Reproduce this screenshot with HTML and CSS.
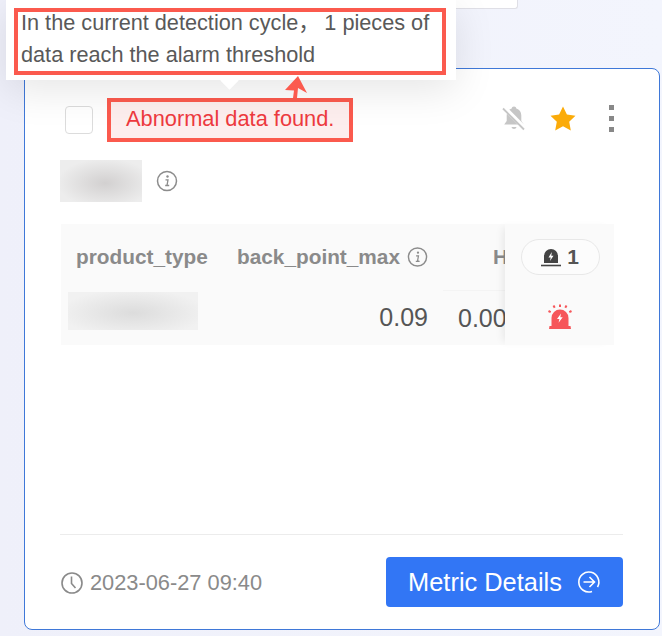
FILE: index.html
```html
<!DOCTYPE html>
<html lang="en">
<head>
    <meta charset="UTF-8">
    <meta name="viewport" content="width=device-width, initial-scale=1.0">
    <title>Metric Card</title>
    <link rel="stylesheet" href="styles.css">
</head>
<body>

    <div class="top-strip"></div>

    <div class="metric-card">
        <div class="card-header">
            <span class="checkbox"></span>
            <span class="status-badge">Abnormal data found.</span>
            <div class="header-actions">
                <svg class="icon-bell" width="26" height="28" viewBox="0 0 26 28">
                    <path d="M13 2.5c1.3 0 2.2.9 2.3 2 3.200.9 5 3.600 5 7v5.500l2.500 3.500H3.200l2.500-3.500V11.500c0-3.400 1.800-6.100 5-7 .1-1.100 1-2 2.300-2z" fill="#c6c6c6"/>
                    <path d="M10.500 23h5c-.3 1.300-1.200 2-2.500 2s-2.200-.7-2.500-2z" fill="#c6c6c6"/>
                    <path d="M3 3.500l20 20" stroke="#fff" stroke-width="4.500"/>
                    <path d="M2 4.500l21 21" stroke="#c6c6c6" stroke-width="1.800"/>
                </svg>
                <svg class="icon-star" width="26" height="25" viewBox="0 0 26 25">
                    <path d="M13 .5l3.900 8 8.600 1.200-6.300 6 1.600 8.800-7.800-4.200-7.800 4.200 1.600-8.800-6.300-6 8.600-1.200z" fill="#fbab09"/>
                </svg>
                <div class="more-dots"><i></i><i></i><i></i></div>
            </div>
        </div>

        <div class="metric-name">
            <div class="blur-block name-blur"></div>
            <svg width="22" height="22" viewBox="0 0 22 22">
                <circle cx="11" cy="11" r="9.500" fill="none" stroke="#8c8c8c" stroke-width="1.500"/>
                <circle cx="11.500" cy="6.500" r="1.200" fill="#8c8c8c"/>
                <path d="M9.500 9.800h2.500l-1 5.600h1.500M9.200 15.500h4" fill="none" stroke="#8c8c8c" stroke-width="1.300"/>
            </svg>
        </div>

        <div class="data-table">
            <div class="table-scroll">
                <div class="table-head">
                    <div class="col-type">product_type</div>
                    <div class="col-back">back_point_max
                        <svg width="22" height="22" viewBox="0 0 22 22">
                            <circle cx="11" cy="11" r="9.500" fill="none" stroke="#8c8c8c" stroke-width="1.500"/>
                            <circle cx="11.500" cy="6.500" r="1.200" fill="#8c8c8c"/>
                            <path d="M9.500 9.800h2.500l-1 5.600h1.500M9.200 15.500h4" fill="none" stroke="#8c8c8c" stroke-width="1.300"/>
                        </svg>
                    </div>
                    <div class="col-h">H</div>
                </div>
                <div class="table-row">
                    <div class="col-type"><div class="blur-block type-blur"></div></div>
                    <div class="col-back num">0.09</div>
                    <div class="col-h num">0.00</div>
                </div>
            </div>
            <div class="table-fixed">
                <div class="fixed-head">
                    <span class="alarm-pill">
                        <svg width="20" height="20" viewBox="0 0 20 20">
                            <path d="M3 16V9a7 7 0 0 1 14 0v7z" fill="#444"/>
                            <path d="M10.800 5L7.500 10.500h2.200L9 14l3.500-5.300h-2.200z" fill="#fff"/>
                            <path d="M0 18.500h20" stroke="#444" stroke-width="1.600"/>
                        </svg>
                        1
                    </span>
                </div>
                <div class="fixed-row">
                    <svg width="26" height="26" viewBox="0 0 26 26">
                        <path d="M4.500 22V14a8.500 8.500 0 0 1 17 0v8z" fill="#f6565a"/>
                        <path d="M14 9.500l-4 5.500h2.400l-.8 3.800 4.100-5.600h-2.400z" fill="#fff"/>
                        <path d="M2.500 22h21l.5 3H2z" fill="#f6565a"/>
                        <path d="M13 .5v2.500M6.500 1.500l1.200 2.200M19.500 1.500l-1.200 2.200M1.500 7l2.200 1.200M24.500 7l-2.200 1.200" stroke="#f6565a" stroke-width="2" fill="none"/>
                    </svg>
                </div>
            </div>
        </div>

        <div class="card-footer">
            <div class="update-time">
                <svg width="24" height="24" viewBox="0 0 24 24">
                    <circle cx="12" cy="12" r="10" fill="none" stroke="#8a8a8a" stroke-width="1.600"/>
                    <path d="M11.500 5.500v7l4 4.500" fill="none" stroke="#8a8a8a" stroke-width="1.600"/>
                </svg>
                2023-06-27 09:40
            </div>
            <button class="details-btn">Metric Details
                <svg width="24" height="24" viewBox="0 0 24 24">
                    <path d="M15 21.500a10 10 0 1 1 5.500-4.500" fill="none" stroke="#fff" stroke-width="1.600"/>
                    <path d="M6.500 12h10.500M12.500 7l5 5-5 5" fill="none" stroke="#fff" stroke-width="1.600"/>
                </svg>
            </button>
        </div>
    </div>

    <!-- tooltip over the card -->
    <div class="tooltip">
        <div class="tooltip-mark">
            <p>In the current detection cycle，&#8201;1 pieces of data reach the alarm threshold</p>
        </div>
        <span class="tooltip-arrow"></span>
    </div>

    <!-- red annotation arrow -->
    <svg class="note-arrow" width="24" height="26" viewBox="0 0 24 26">
        <path d="M14 1L23 18 14 13 13 23H9L10 15.500 1 15z" fill="#fb5a4e"/>
    </svg>

</body>
</html>
```

FILE: styles.css
```css
body {
    font-family: "Liberation Sans", Arial, "Noto Sans CJK SC", sans-serif;
    margin: 0;
    height: 636px;
    overflow: hidden;
    position: relative;
    background: linear-gradient(90deg, #eff0fa, #f3f5fd);
}

.top-strip {
    width: 300px;
    height: 8px;
    margin-left: 216px;
    background-color: #fff;
    border: 1px solid #dfdfe6;
    border-top: none;
    border-radius: 0 0 3px 3px;
}

.metric-card {
    box-sizing: border-box;
    width: 636px;
    height: 562px;
    margin: 59px 0 0 24px;
    padding: 29px 36px 22px 35px;
    background-color: #fff;
    border: 1px solid #3f78d8;
    border-radius: 8px;
    display: flex;
    flex-direction: column;
}

.card-header {
    display: flex;
    align-items: center;
    height: 44px;
}

.checkbox {
    box-sizing: border-box;
    width: 28px;
    height: 28px;
    margin: -1px 14px 0 5px;
    border: 1px solid #dcdcdc;
    border-radius: 4px;
}

.status-badge {
    box-sizing: border-box;
    width: 246px;
    height: 44px;
    padding-left: 15px;
    line-height: 33px;
    font-size: 21.8px;
    color: #ee3a3f;
    background-color: #fdeeee;
    border: 4px solid #fb5a4e;
}

.header-actions {
    display: flex;
    align-items: center;
    margin: -4px 0 0 auto;
    padding-right: 9px;
}

.icon-bell {
    margin-right: 23px;
}

.icon-star {
    margin-right: 33px;
}

.more-dots {
    display: flex;
    flex-direction: column;
    gap: 6px;
}

.more-dots i {
    width: 5px;
    height: 5px;
    background-color: #888;
}

.metric-name {
    display: flex;
    align-items: center;
    gap: 14px;
    margin-top: 18px;
}

.blur-block {
    background: radial-gradient(ellipse at 55% 55%, #d2d0d0, #ededed 75%);
}

.name-blur {
    width: 82px;
    height: 42px;
}

.data-table {
    display: flex;
    width: 553px;
    height: 121px;
    margin: 22px 0 0 1px;
    background-color: #fafafa;
}

.table-scroll {
    width: 444px;
    overflow: hidden;
}

.table-head,
.table-row {
    display: flex;
    width: 600px;
}

.table-head {
    height: 66px;
    align-items: center;
    font-size: 20.8px;
    font-weight: bold;
    color: #8a8a8a;
}

.table-row {
    height: 55px;
    color: #555;
}

.col-type {
    box-sizing: border-box;
    width: 161px;
}

.table-head .col-type {
    padding-left: 15px;
}

.table-row .col-type {
    padding: 2px 0 0 7px;
}

.type-blur {
    width: 130px;
    height: 38px;
    background: radial-gradient(ellipse at 50% 55%, #dcdcdc, #f1f1f1 80%);
}

.col-back {
    box-sizing: border-box;
    width: 221px;
    padding: 0 15px;
}

.table-head .col-back {
    display: flex;
    align-items: center;
    gap: 7px;
    white-space: nowrap;
}

.col-h {
    box-sizing: border-box;
    flex: 1;
    padding-left: 15px;
}

.table-head .col-h {
    padding-left: 50px;
}

.table-row .col-h {
    border-top: 1px solid #f4f4f4;
}

.num {
    font-size: 25px;
    line-height: 54px;
}

.table-row .col-back {
    text-align: right;
}

.table-fixed {
    width: 109px;
    box-shadow: -6px 0 8px -4px rgba(0, 0, 0, 0.08);
    position: relative;
}

.fixed-head {
    height: 66px;
    display: flex;
    justify-content: center;
    align-items: center;
}

.alarm-pill {
    box-sizing: border-box;
    display: flex;
    align-items: center;
    justify-content: center;
    gap: 6px;
    width: 79px;
    height: 36px;
    margin-right: -1px;
    font-size: 21px;
    font-weight: bold;
    color: #555;
    background-color: #fcfcfc;
    border: 1px solid #e8e8e8;
    border-radius: 18px;
}

.fixed-row {
    display: flex;
    justify-content: center;
    padding-top: 14px;
}

.card-footer {
    margin-top: auto;
    padding-top: 22px;
    border-top: 1px solid #ececec;
    display: flex;
    justify-content: space-between;
    align-items: center;
}

.update-time {
    display: flex;
    align-items: center;
    gap: 6px;
    padding-top: 2px;
    font-size: 21.8px;
    color: #8a8a8a;
}

.details-btn {
    display: flex;
    align-items: center;
    justify-content: center;
    gap: 15px;
    width: 237px;
    height: 50px;
    padding: 0;
    font-family: inherit;
    font-size: 25.4px;
    color: #fff;
    background-color: #3276f5;
    border: none;
    border-radius: 4px;
}

.tooltip {
    position: absolute;
    z-index: 1;
    left: 6px;
    top: 0;
    width: 450px;
    height: 80px;
    background-color: #fff;
    box-shadow: 0 10px 40px rgba(0, 0, 0, 0.1);
}

.tooltip-mark {
    box-sizing: border-box;
    position: absolute;
    left: 8px;
    top: 8px;
    width: 432px;
    height: 67px;
    padding-left: 3px;
    border: 4px solid #fb5a4e;
    display: flex;
    align-items: flex-end;
}

.tooltip-mark p {
    margin: 0;
    width: 420px;
    font-size: 21.7px;
    line-height: 32px;
    color: #595959;
}

.tooltip-arrow {
    position: absolute;
    left: 217px;
    top: 74px;
    width: 13px;
    height: 13px;
    background-color: #fff;
    transform: rotate(45deg);
    z-index: -1;
}

.note-arrow {
    position: absolute;
    z-index: 2;
    left: 284px;
    top: 75px;
}
```
